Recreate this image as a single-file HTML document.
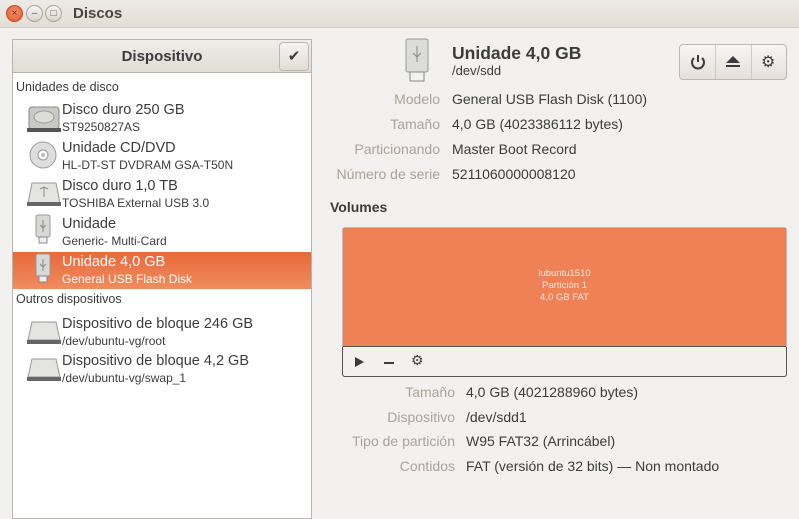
<!DOCTYPE html>
<html><head><meta charset="utf-8"><style>
*{margin:0;padding:0;box-sizing:border-box}
body{width:799px;height:506px;overflow:hidden;background:#f2f1f0;font-family:"Liberation Sans",sans-serif;color:#3c3c3c;position:relative}
.a{position:absolute;white-space:nowrap}
.tb{left:0;top:0;width:799px;height:28px;background:linear-gradient(#edebe7,#e2ded7);border-bottom:1px solid #d3cec6}
.wb{width:17px;height:17px;border-radius:50%;top:5px;border:1px solid #aaa59c;background:linear-gradient(#f6f5f3,#d9d5ce);font-size:10px;text-align:center;line-height:15px;color:#555}
.panel{left:12px;top:39px;width:300px;height:480px;border:1px solid #b9b5ae;background:#fff}
.hdr{left:0;top:0;width:298px;height:33px;background:linear-gradient(#f0eeeb,#e0dcd5);border-bottom:1px solid #b9b5ae;font-weight:bold;font-size:15px;text-align:center;line-height:33px;color:#3c3c3c}
.t1{font-size:14.5px;color:#3c3c3c}
.t2{font-size:12px;color:#3c3c3c}
.sec{font-size:12.5px;color:#3c3c3c}
.lbl{font-size:14px;color:#a9a39b;text-align:right}
.val{font-size:14px;color:#3c3c3c}
</style></head><body>
<div class="a tb"></div>
<div class="a wb" style="left:6px;background:radial-gradient(circle at 50% 40%,#f5916b,#e0562a);border-color:#c14d23;color:#7a2a10">×</div>
<div class="a wb" style="left:26px">–</div>
<div class="a wb" style="left:45px">□</div>
<div class="a" style="left:73px;top:5px;font-size:15px;font-weight:bold;color:#4a4540">Discos</div>

<div class="a panel">
 <div class="a hdr">Dispositivo</div>
 <div class="a" style="left:266px;top:2px;width:30px;height:29px;border:1px solid #bcb8b1;border-radius:4px;background:linear-gradient(#f5f4f2,#e2ded8);text-align:center;line-height:27px;font-size:15px;color:#3c3c3c">✔</div>
 <div class="a sec" style="left:3px;top:40px">Unidades de disco</div>
 <div class="a" style="left:0;top:212px;width:298px;height:37px;background:linear-gradient(#e9693b,#f08c5e)"></div>
 <div class="a sec" style="left:3px;top:252px">Outros dispositivos</div>
</div>

<svg class="a" style="left:26px;top:104px" width="36" height="30"><rect x="3" y="3" width="30" height="22" rx="3" fill="#c9c9c6" stroke="#888" /><ellipse cx="18" cy="13" rx="10" ry="6" fill="#dcdcda" stroke="#999"/><rect x="1" y="24" width="34" height="4" fill="#555"/></svg>
<svg class="a" style="left:28px;top:140px" width="30" height="30"><circle cx="15" cy="15" r="13" fill="#dedede" stroke="#9a9a9a"/><circle cx="15" cy="15" r="5" fill="#fff" stroke="#999"/><circle cx="15" cy="15" r="2" fill="#bbb"/></svg>
<svg class="a" style="left:26px;top:180px" width="36" height="28"><path d="M6 3h24l4 20H2z" fill="#e4e4e2" stroke="#999"/><rect x="1" y="22" width="34" height="4" fill="#666"/><path d="M18 7v10M14 9l4 -2 4 2" stroke="#888" fill="none"/></svg>
<svg class="a" style="left:35px;top:214px" width="16" height="32"><rect x="1" y="1" width="14" height="22" rx="2" fill="#d8d8d6" stroke="#999"/><rect x="4" y="23" width="8" height="6" fill="#eee" stroke="#888"/><path d="M8 6v12M5 11l3 3 3-3" stroke="#888" fill="none"/></svg>
<svg class="a" style="left:35px;top:253px" width="16" height="32"><rect x="1" y="1" width="14" height="22" rx="2" fill="#d8d8d6" stroke="#999"/><rect x="4" y="23" width="8" height="6" fill="#eee" stroke="#888"/><path d="M8 6v12M5 11l3 3 3-3" stroke="#888" fill="none"/></svg>
<svg class="a" style="left:26px;top:320px" width="36" height="26"><path d="M6 2h24l4 18H2z" fill="#e4e4e2" stroke="#999"/><rect x="1" y="20" width="34" height="4" fill="#666"/></svg>
<svg class="a" style="left:26px;top:357px" width="36" height="26"><path d="M6 2h24l4 18H2z" fill="#e4e4e2" stroke="#999"/><rect x="1" y="20" width="34" height="4" fill="#666"/></svg>

<div class="a t1" style="left:62px;top:102px">Disco duro 250 GB</div><div class="a t2" style="left:62px;top:120px">ST9250827AS</div>
<div class="a t1" style="left:62px;top:140px">Unidade CD/DVD</div><div class="a t2" style="left:62px;top:158px">HL-DT-ST DVDRAM GSA-T50N</div>
<div class="a t1" style="left:62px;top:178px">Disco duro 1,0 TB</div><div class="a t2" style="left:62px;top:196px">TOSHIBA External USB 3.0</div>
<div class="a t1" style="left:62px;top:216px">Unidade</div><div class="a t2" style="left:62px;top:234px">Generic- Multi-Card</div>
<div class="a t1" style="left:62px;top:254px;color:#fff">Unidade 4,0 GB</div><div class="a t2" style="left:62px;top:272px;color:#fff">General USB Flash Disk</div>
<div class="a t1" style="left:62px;top:316px">Dispositivo de bloque 246 GB</div><div class="a t2" style="left:62px;top:334px">/dev/ubuntu-vg/root</div>
<div class="a t1" style="left:62px;top:353px">Dispositivo de bloque 4,2 GB</div><div class="a t2" style="left:62px;top:371px">/dev/ubuntu-vg/swap_1</div>

<svg class="a" style="left:405px;top:38px" width="24" height="46"><rect x="1" y="1" width="22" height="33" rx="2" fill="#dcdcda" stroke="#999"/><rect x="5" y="34" width="14" height="9" fill="#f2f2f0" stroke="#888"/><path d="M12 8v16M8 15l4 4 4-4" stroke="#888" fill="none"/></svg>
<div class="a" style="left:452px;top:43px;font-size:17.5px;font-weight:bold;color:#3c3c3c">Unidade 4,0 GB</div>
<div class="a" style="left:452px;top:63px;font-size:13px">/dev/sdd</div>
<div class="a" style="left:679px;top:44px;width:108px;height:36px;border:1px solid #bdb9b2;border-radius:4px;background:linear-gradient(#f7f6f4,#e4e1dc)"></div>
<div class="a" style="left:715px;top:45px;width:1px;height:34px;background:#cfcbc4"></div>
<div class="a" style="left:751px;top:45px;width:1px;height:34px;background:#cfcbc4"></div>
<svg class="a" style="left:689px;top:53px" width="18" height="18"><path d="M5 5a6 6 0 1 0 8 0" stroke="#3c3c3c" stroke-width="2" fill="none"/><path d="M9 2v7" stroke="#3c3c3c" stroke-width="2"/></svg>
<svg class="a" style="left:724px;top:54px" width="18" height="16"><path d="M2 9L9 2l7 7z" fill="#3c3c3c"/><rect x="2" y="11" width="14" height="2" fill="#3c3c3c"/></svg>
<div class="a" style="left:761px;top:52px;font-size:16px;color:#3c3c3c">⚙</div>

<div class="a lbl" style="left:300px;width:140px;top:91px">Modelo</div><div class="a val" style="left:452px;top:91px">General USB Flash Disk (1100)</div>
<div class="a lbl" style="left:300px;width:140px;top:116px">Tamaño</div><div class="a val" style="left:452px;top:116px">4,0 GB (4023386112 bytes)</div>
<div class="a lbl" style="left:300px;width:140px;top:141px">Particionando</div><div class="a val" style="left:452px;top:141px">Master Boot Record</div>
<div class="a lbl" style="left:300px;width:140px;top:166px">Número de serie</div><div class="a val" style="left:452px;top:166px">5211060000008120</div>
<div class="a" style="left:330px;top:199px;font-size:14px;font-weight:bold">Volumes</div>

<div class="a" style="left:342px;top:227px;width:445px;height:150px;border:1px solid #bbb;border-radius:3px;background:#f2f1f0"></div>
<div class="a" style="left:343px;top:228px;width:443px;height:119px;background:#ef8156;border-bottom:1px solid #555"></div>
<div class="a" style="left:343px;top:268px;width:443px;text-align:center;font-size:9.5px;line-height:12px;color:#fde8de">lubuntu1510<br>Partición 1<br>4,0 GB FAT</div>
<div class="a" style="left:342px;top:347px;width:445px;height:30px;border:1px solid #555;border-top:none;border-radius:0 0 3px 3px"></div>
<svg class="a" style="left:354px;top:355px" width="12" height="14"><path d="M1 2l9 5-9 5z" fill="#3c3c3c"/></svg>
<div class="a" style="left:384px;top:362px;width:10px;height:2px;background:#3c3c3c"></div>
<div class="a" style="left:411px;top:352px;font-size:14px;color:#3c3c3c">⚙</div>

<div class="a lbl" style="left:300px;width:155px;top:384px">Tamaño</div><div class="a val" style="left:466px;top:384px">4,0 GB (4021288960 bytes)</div>
<div class="a lbl" style="left:300px;width:155px;top:409px">Dispositivo</div><div class="a val" style="left:466px;top:409px">/dev/sdd1</div>
<div class="a lbl" style="left:300px;width:155px;top:433px">Tipo de partición</div><div class="a val" style="left:466px;top:433px">W95 FAT32 (Arrincábel)</div>
<div class="a lbl" style="left:300px;width:155px;top:458px">Contidos</div><div class="a val" style="left:466px;top:458px">FAT (versión de 32 bits) — Non montado</div>
</body></html>
